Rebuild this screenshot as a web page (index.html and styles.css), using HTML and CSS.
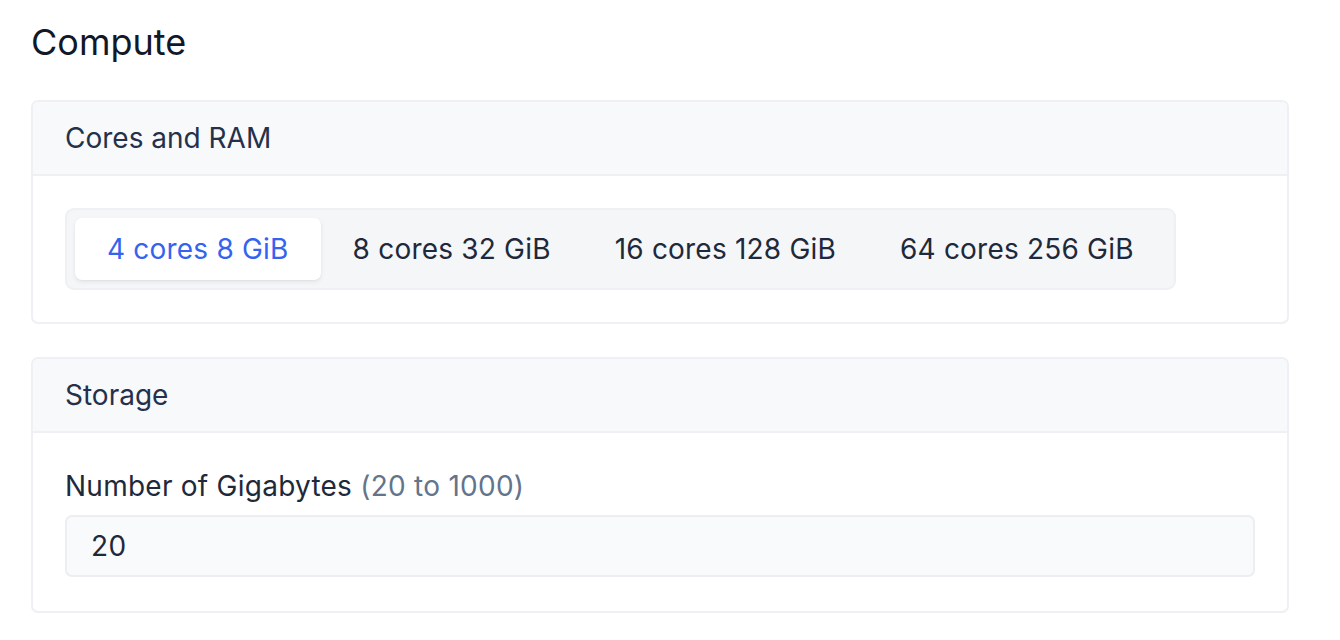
FILE: index.html
```html
<!DOCTYPE html>
<html lang="en">
<head>
<meta charset="utf-8">
<title>Compute</title>
<link rel="stylesheet" href="styles.css">
</head>
<body>
<main class="page">
  <h1 class="title">Compute</h1>

  <section class="card">
    <header class="card-header">Cores and RAM</header>
    <div class="card-body">
      <div class="segmented">
        <button class="seg-item is-active">4 cores 8 GiB</button>
        <button class="seg-item">8 cores 32 GiB</button>
        <button class="seg-item">16 cores 128 GiB</button>
        <button class="seg-item">64 cores 256 GiB</button>
      </div>
    </div>
  </section>

  <section class="card card-storage">
    <header class="card-header">Storage</header>
    <div class="card-body">
      <label class="field-label" for="gb">Number of Gigabytes <span class="hint">(20 to 1000)</span></label>
      <input class="field-input" id="gb" type="text" value="20">
    </div>
  </section>
</main>
</body>
</html>
```

FILE: styles.css
```css
* { box-sizing: border-box; }

html, body {
  margin: 0;
  background: #ffffff;
}

body {
  font-family: Inter, "Noto Sans", sans-serif;
  color: #1e293b;
}

.page {
  padding: 20px 51px 0 31px;
}

.title {
  margin: 0;
  font-size: 36px;
  line-height: 44px;
  font-weight: 400;
  color: #111827;
}

.card {
  margin-top: 36px;
  border: 2px solid #eef0f4;
  border-radius: 7px;
  overflow: hidden;
}

.card-storage {
  margin-top: 33px;
}

.card-header {
  background: #f8f9fb;
  border-bottom: 2px solid #eef0f4;
  padding: 16px 32px;
  font-size: 28px;
  line-height: 40px;
  color: #25314b;
}

.card-body {
  padding: 32px;
}

.card-storage .card-body {
  padding-bottom: 34px;
}

.segmented {
  display: inline-flex;
  padding: 8px;
  background: #f5f6f8;
  border: 2px solid #eef0f4;
  border-radius: 9px;
}

.seg-item {
  font-family: inherit;
  font-size: 28px;
  line-height: 62px;
  height: 62px;
  padding: 0 32px;
  border: 0;
  background: transparent;
  color: #1e293b;
  letter-spacing: 0.2px;
  border-radius: 7px;
  cursor: pointer;
}

.seg-item.is-active {
  background: #ffffff;
  color: #3563f0;
  box-shadow: 0 2px 5px rgba(15, 23, 42, 0.07), 0 1px 2px rgba(15, 23, 42, 0.04);
}

.field-label {
  display: block;
  padding-top: 1px;
  font-size: 28px;
  line-height: 40px;
  letter-spacing: 0.25px;
  color: #1e293b;
}

.hint {
  color: #64748b;
}

.field-input {
  display: block;
  width: 100%;
  margin-top: 9px;
  height: 62px;
  padding: 0 24px;
  font-family: inherit;
  font-size: 28px;
  letter-spacing: 0.3px;
  color: #1e293b;
  background: #f9fafc;
  border: 2px solid #eceef2;
  border-radius: 7px;
  outline: none;
}
```
